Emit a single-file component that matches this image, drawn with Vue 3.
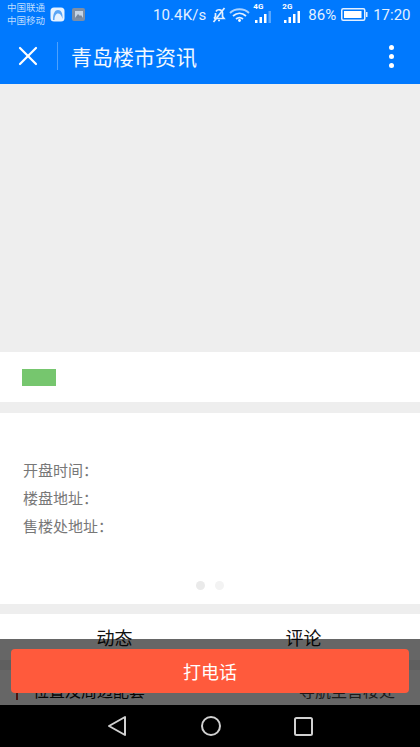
<script setup>
const infoRows = ['开盘时间：', '楼盘地址：', '售楼处地址：'];
const tabs = ['动态', '评论'];
</script>

<template>
  <div class="phone">
    <div class="top">
      <div class="status">
        <div class="carrier">
          <span>中国联通</span>
          <span>中国移动</span>
        </div>
        <svg class="app-icon" width="15" height="15" viewBox="0 0 15 15">
          <rect x="0.5" y="0.5" width="14" height="14" rx="3.5" fill="#e6f2ff" />
          <path d="M3 13 C3 6 5 3 8 3 C11 3 13 6 12.5 12 C11.5 8 10 6.5 8 6.5 C6 6.5 4.5 9 4.5 13 Z" fill="#5aa5f5" />
        </svg>
        <svg class="app-icon2" width="13" height="13" viewBox="0 0 13 13">
          <rect width="13" height="13" rx="2" fill="#7d8ea5" />
          <rect x="3" y="3" width="8" height="7" fill="#c4d4e6" />
          <path d="M3 10 L6 6 L8 8 L9 7 L11 10 Z" fill="#76879e" />
        </svg>
        <span class="speed">10.4K/s</span>
        <svg class="mute" width="16" height="16" viewBox="0 0 16 16" fill="none" stroke="#e4f0ff" stroke-width="1.7">
          <path d="M3 11.5 H13 L11.5 9.5 V6 A3.5 3.5 0 0 0 5 4.5" />
          <path d="M4.5 6 V9.5 L3 11.5" />
          <path d="M2.5 15 L13.5 1" />
          <path d="M7 13.5 H9" />
        </svg>
        <svg class="wifi" width="21" height="15" viewBox="0 0 21 15" fill="none" stroke="#e4f0ff" stroke-width="1.8">
          <path d="M1 6 C6 1 15 1 20 6" stroke-opacity="0.75" />
          <path d="M4 9 C8 5.5 13 5.5 17 9" />
          <path d="M7 12 C9 10.5 12 10.5 14 12" />
          <circle cx="10.5" cy="13.5" r="1.4" fill="#fff" stroke="none" />
        </svg>
        <div class="signal sig-first">
          <span class="net">4G</span>
          <svg width="17" height="13" viewBox="0 0 17 13" fill="#fff">
            <rect x="0" y="9" width="2.5" height="3" />
            <rect x="4.5" y="6" width="2.5" height="6" />
            <rect x="9" y="3" width="2.5" height="9" />
            <rect x="13.5" y="0" width="2.5" height="12" fill-opacity="0.35" />
          </svg>
        </div>
        <div class="signal sig-second">
          <span class="net">2G</span>
          <svg width="17" height="13" viewBox="0 0 17 13" fill="#fff">
            <rect x="0" y="9" width="2.5" height="3" />
            <rect x="4.5" y="6" width="2.5" height="6" />
            <rect x="9" y="3" width="2.5" height="9" />
            <rect x="13.5" y="0" width="2.5" height="12" />
          </svg>
        </div>
        <span class="percent">86%</span>
        <svg class="battery" width="27" height="13" viewBox="0 0 27 13">
          <rect x="0.75" y="0.75" width="23" height="11.5" rx="1.5" fill="none" stroke="#e4f0ff" stroke-width="1.5" />
          <rect x="3" y="3" width="17.5" height="7" fill="#fff" />
          <rect x="25" y="4" width="1.5" height="5" fill="#e4f0ff" />
        </svg>
        <span class="clock">17:20</span>
      </div>
      <div class="header">
        <svg class="close" width="20" height="20" viewBox="0 0 20 20" stroke="#fff" stroke-width="2.2" stroke-linecap="round">
          <path d="M2 2 L18 18" />
          <path d="M18 2 L2 18" />
        </svg>
        <div class="divider"></div>
        <div class="title">青岛楼市资讯</div>
        <div class="more">
          <i></i>
          <i></i>
          <i></i>
        </div>
      </div>
    </div>

    <div class="content">
      <div class="banner"></div>
      <div class="tag-row">
        <div class="tag"></div>
      </div>
      <div class="info">
        <div class="info-rows">
          <div v-for="row in infoRows" :key="row" class="info-row">{{ row }}</div>
        </div>
        <div class="dots">
          <i class="dot"></i>
          <i class="dot light"></i>
        </div>
      </div>
      <div class="tabs">
        <div v-for="tab in tabs" :key="tab" class="tab">{{ tab }}</div>
      </div>
      <div class="section-head">
        <div class="section-title">位置及周边配套</div>
        <div class="section-link">导航至售楼处</div>
      </div>

      <div class="call-bar">
        <button class="call-btn">打电话</button>
      </div>
    </div>

    <div class="navbar">
      <svg width="20" height="22" viewBox="0 0 20 22" fill="none" stroke="#d0d0d0" stroke-width="2" stroke-linejoin="round">
        <path d="M18 2 V20 L2 11 Z" />
      </svg>
      <svg width="20" height="20" viewBox="0 0 20 20" fill="none" stroke="#d0d0d0" stroke-width="2">
        <circle cx="10" cy="10" r="9" />
      </svg>
      <svg width="19" height="19" viewBox="0 0 19 19" fill="none" stroke="#d0d0d0" stroke-width="2">
        <rect x="1" y="1" width="17" height="17" rx="1.5" />
      </svg>
    </div>
  </div>
</template>

<style>
html,
body {
  margin: 0;
  background: #000;
}
</style>

<style scoped>
.phone {
  width: 420px;
  height: 747px;
  display: flex;
  flex-direction: column;
  overflow: hidden;
  font-family: Roboto, "Noto Sans CJK SC", sans-serif;
}

.top {
  background: #0079fe;
  color: #fff;
}

.status {
  height: 28px;
  display: flex;
  align-items: center;
  padding-left: 7px;
  color: #e4f0ff;
}

.carrier {
  display: flex;
  flex-direction: column;
  width: 38px;
  font-size: 9.5px;
  line-height: 13px;
  color: #bcdcff;
  font-family: "Noto Sans CJK SC", sans-serif;
  white-space: nowrap;
}

.app-icon {
  margin-left: 5px;
  margin-top: 1px;
}

.app-icon2 {
  margin-left: 7px;
  margin-top: 1px;
}

.speed {
  margin-left: 68px;
  font-size: 15px;
  letter-spacing: 0.1px;
  margin-top: 1px;
}

.mute {
  margin-left: 5px;
  margin-top: 1px;
}

.wifi {
  margin-left: 2px;
  margin-top: 1px;
}

.signal {
  display: flex;
  flex-direction: column;
  align-items: flex-start;
  position: relative;
  height: 20px;
  width: 17px;
  justify-content: flex-end;
}

.sig-first {
  margin-left: 5px;
}

.sig-second {
  margin-left: 12px;
}

.net {
  position: absolute;
  top: -2px;
  left: -2px;
  font-size: 8px;
  font-weight: 700;
  line-height: 10px;
  color: #fff;
}

.percent {
  margin-left: 7px;
  font-size: 15px;
  margin-top: 1px;
}

.battery {
  margin-left: 5px;
  margin-top: 1px;
}

.clock {
  margin-left: 5px;
  font-size: 15px;
  margin-top: 1px;
}

.header {
  height: 56px;
  display: flex;
  align-items: center;
  padding-left: 18px;
  padding-right: 26px;
  box-sizing: border-box;
}

.divider {
  width: 1px;
  height: 28px;
  margin-left: 19px;
  background: rgba(255, 255, 255, 0.3);
}

.title {
  margin-left: 13px;
  font-size: 21px;
  font-family: "Noto Sans CJK SC", sans-serif;
  color: #f2f8ff;
}

.more {
  margin-left: auto;
  display: flex;
  flex-direction: column;
  gap: 4px;
}

.more i {
  display: block;
  width: 5px;
  height: 5px;
  border-radius: 50%;
  background: #fff;
}

.content {
  flex: 1;
  position: relative;
  overflow: hidden;
  background: #fff;
}

.banner {
  height: 268px;
  background: #eeeeee;
}

.tag-row {
  padding: 17px 0 0 22px;
  box-sizing: border-box;
  background: #fff;
  border-bottom: 11px solid #eeeeee;
  height: 61px;
}

.tag {
  width: 34px;
  height: 17px;
  background: #76c66e;
}

.info {
  padding: 43px 0 0 23px;
  box-sizing: border-box;
  display: flex;
  flex-direction: column;
  border-bottom: 10px solid #eeeeee;
  height: 201px;
}

.info-row {
  font-size: 15px;
  line-height: 28px;
  color: #777;
  font-family: "Noto Sans CJK SC", sans-serif;
}

.dots {
  display: flex;
  align-items: center;
  justify-content: center;
  gap: 10px;
  margin-top: 41px;
  margin-left: -23px;
}

.dot {
  width: 9px;
  height: 9px;
  border-radius: 50%;
  background: #eaeaea;
}

.dot.light {
  background: #f3f3f3;
}

.tabs {
  height: 56px;
  padding: 0 20px 10px;
  box-sizing: border-box;
  display: grid;
  grid-template-columns: 189px 189px;
  border-bottom: 10px solid #eeeeee;
}

.tab {
  font-size: 18px;
  line-height: 46px;
  text-align: center;
  color: #111;
  font-family: "Noto Sans CJK SC", sans-serif;
}

.section-head {
  display: flex;
  justify-content: space-between;
  align-items: center;
  padding: 8px 25px 0 16px;
  font-family: "Noto Sans CJK SC", sans-serif;
}

.section-title {
  border-left: 2px solid #c0302a;
  padding-left: 15px;
  font-size: 16px;
  line-height: 20px;
  color: #111;
}

.section-link {
  font-size: 16px;
  color: #444;
}

.call-bar {
  position: absolute;
  left: 0;
  right: 0;
  bottom: 0;
  height: 66px;
  box-sizing: border-box;
  padding: 10px 11px 0;
  background: rgba(0, 0, 0, 0.6);
}

.call-btn {
  display: block;
  width: 100%;
  height: 44px;
  border: none;
  border-radius: 4px;
  background: #ff5a3c;
  color: #fff;
  font-size: 18px;
  font-family: "Noto Sans CJK SC", sans-serif;
  padding: 0;
}

.navbar {
  height: 42px;
  background: #000;
  display: flex;
  align-items: center;
  justify-content: space-between;
  padding: 0 107px;
}
</style>
